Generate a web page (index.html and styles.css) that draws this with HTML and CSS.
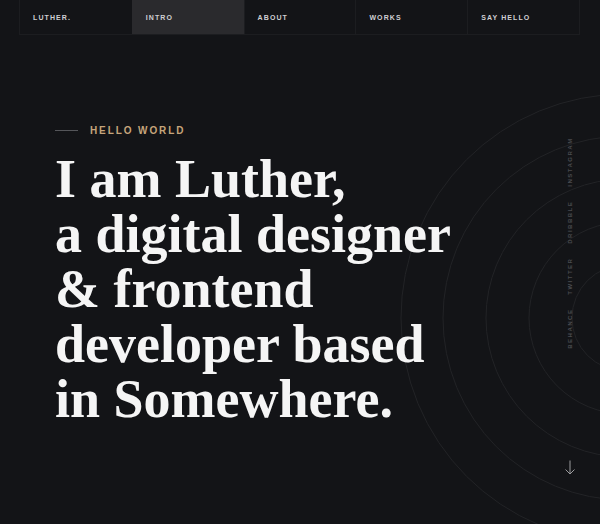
FILE: index.html
```html
<!DOCTYPE html>
<html lang="en">
<head>
<meta charset="utf-8">
<title>Luther — Intro</title>
<link rel="stylesheet" href="styles.css">
</head>
<body>
<div class="page">
  <svg class="rings" width="600" height="524" viewBox="0 0 600 524" aria-hidden="true">
    <g fill="none" stroke="#222326" stroke-width="1">
      <circle cx="625" cy="318" r="224"/>
      <circle cx="625" cy="318" r="182"/>
      <circle cx="625" cy="318" r="139"/>
      <circle cx="625" cy="318" r="96"/>
      <circle cx="625" cy="318" r="53"/>
    </g>
  </svg>
  <header class="nav">
    <a class="nav-item" href="#">LUTHER.</a>
    <a class="nav-item is-active" href="#">INTRO</a>
    <a class="nav-item" href="#">ABOUT</a>
    <a class="nav-item" href="#">WORKS</a>
    <a class="nav-item" href="#">SAY HELLO</a>
  </header>
  <main class="hero">
    <section class="intro">
      <p class="eyebrow"><span class="eyebrow-line"></span>HELLO WORLD</p>
      <h1 class="headline">I am Luther,<br>a digital designer<br>&amp; frontend<br>developer based<br>in Somewhere.</h1>
    </section>
    <aside class="side">
      <ul class="social">
        <li>BEHANCE</li>
        <li>TWITTER</li>
        <li>DRIBBBLE</li>
        <li>INSTAGRAM</li>
      </ul>
      <svg class="arrow" width="12" height="15" viewBox="0 0 12 15" aria-hidden="true">
        <path d="M6 0.5 V14 M1.5 9.5 L6 14 L10.5 9.5" fill="none" stroke="#9b9b9e" stroke-width="1"/>
      </svg>
    </aside>
  </main>
</div>
</body>
</html>
```
FILE: styles.css
```css
html, body {
  margin: 0;
  padding: 0;
  background: #131417;
}

body {
  font-family: "Liberation Sans", Arial, sans-serif;
  color: #f4f4f4;
  overflow: hidden;
}

.page {
  position: relative;
  width: 600px;
  height: 524px;
  overflow: hidden;
}

.rings {
  position: absolute;
  left: 0;
  top: 0;
  z-index: 0;
}

.nav {
  position: relative;
  z-index: 1;
  display: grid;
  grid-template-columns: repeat(5, 1fr);
  width: 559px;
  height: 34px;
  margin-left: 19px;
  border: 1px solid #1c1d20;
  border-top: 0;
}

.nav-item {
  display: flex;
  align-items: center;
  padding-left: 13px;
  padding-top: 1px;
  font-size: 7px;
  font-weight: 700;
  letter-spacing: 1.1px;
  color: #cfcfd2;
  text-decoration: none;
  border-left: 1px solid #1c1d20;
}

.nav-item:first-child {
  border-left: 0;
}

.nav-item.is-active {
  background: #2a2a2d;
  border-left-color: #2a2a2d;
}

.hero {
  position: relative;
  z-index: 1;
  display: grid;
  grid-template-columns: 1fr 60px;
}

.intro {
  padding-left: 55px;
  padding-top: 89px;
}

.eyebrow {
  display: flex;
  align-items: center;
  gap: 12px;
  margin: 0;
  height: 12px;
  font-size: 10px;
  font-weight: 700;
  letter-spacing: 1.9px;
  color: #c6a57b;
}

.eyebrow-line {
  display: block;
  width: 23px;
  height: 1px;
  background: #55565a;
}

.headline {
  margin: 16px 0 0;
  font-family: "Liberation Serif", "Times New Roman", serif;
  font-weight: 700;
  font-size: 54px;
  line-height: 55px;
  letter-spacing: 0;
  color: #f5f5f5;
}

.side {
  display: flex;
  flex-direction: column;
  align-items: center;
  padding-top: 102px;
}

.social {
  display: flex;
  gap: 14px;
  margin: 0;
  padding: 0;
  list-style: none;
  writing-mode: vertical-rl;
  transform: rotate(180deg);
  font-size: 6px;
  font-weight: 700;
  letter-spacing: 1.5px;
  line-height: 8px;
  color: #4a4b4f;
}

.arrow {
  display: block;
  margin-top: 111px;
}
```
